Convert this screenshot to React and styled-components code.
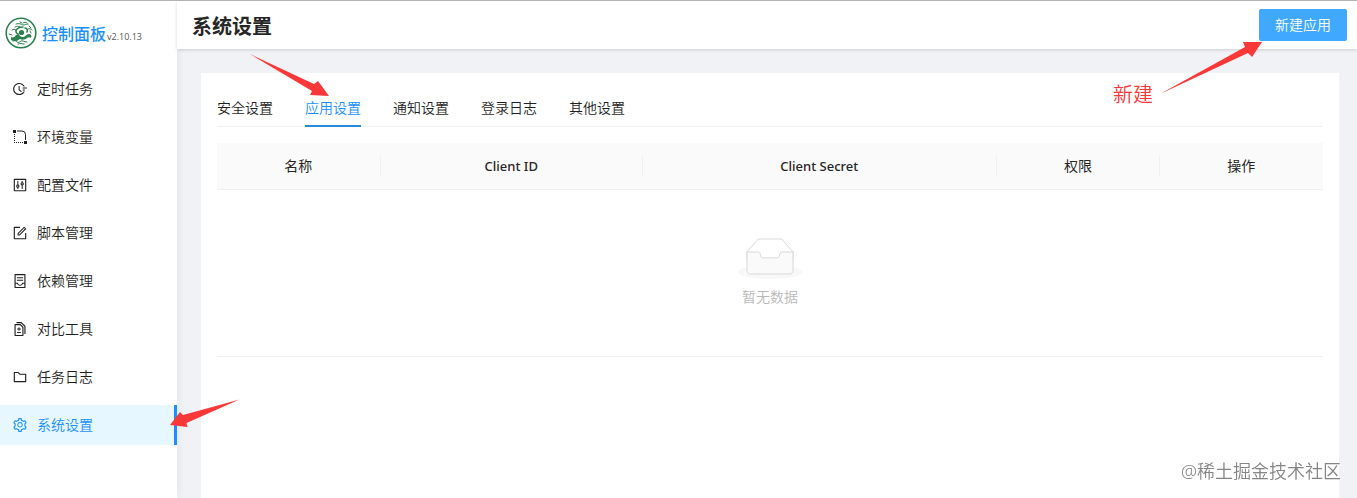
import React, { useState } from 'react'
import styled, { createGlobalStyle } from 'styled-components'
import {
  AiOutlineFieldTime,
  AiOutlineControl,
  AiOutlineForm,
  AiOutlineContainer,
  AiOutlineDiff,
  AiOutlineFolder,
  AiOutlineSetting,
} from 'react-icons/ai'

const GlobalStyle = createGlobalStyle`
  * {
    box-sizing: border-box;
  }

  body {
    margin: 0;
    overflow: hidden;
    color: #262626;
    background: #f0f2f5;
    font-family: 'Noto Sans', 'Noto Sans CJK SC', sans-serif;
    font-size: 14px;
    font-weight: 350;
    line-height: 22px;
  }

  button {
    font-family: inherit;
    font-weight: inherit;
  }
`

const Layout = styled.div`
  display: flex;
  min-height: 100vh;
  border-top: 1px solid #b8b8b8;
`

const Sidebar = styled.aside`
  flex: none;
  width: 177px;
  background: #fff;
  box-shadow: 2px 0 8px rgba(29, 35, 41, 0.05);
`

const Brand = styled.a`
  display: flex;
  align-items: center;
  height: 64px;
  padding-left: 5px;
  color: #1890ff;
  text-decoration: none;
`

const BrandName = styled.span`
  margin: 2px 0 0 5px;
  font-size: 16px;
  font-weight: 500;
`

const Version = styled.span`
  margin: 8px 0 0 1px;
  color: #555;
  font-family: 'Open Sans', sans-serif;
  font-size: 9px;
  font-weight: 500;
`

const Menu = styled.nav`
  display: flex;
  flex-direction: column;
  gap: 8px;
  padding-top: 4px;
`

const MenuItem = styled.a`
  position: relative;
  display: flex;
  align-items: center;
  gap: 9px;
  height: 40px;
  padding-left: 12px;
  color: ${({ $active }) => ($active ? '#1890ff' : '#1f1f1f')};
  background: ${({ $active }) => ($active ? '#e6f7ff' : 'transparent')};
  border-right: 3px solid ${({ $active }) => ($active ? '#1890ff' : 'transparent')};
  text-decoration: none;
`

const Main = styled.main`
  display: flex;
  flex: 1;
  flex-direction: column;
  min-width: 0;
`

const Header = styled.header`
  position: relative;
  display: flex;
  align-items: center;
  justify-content: space-between;
  height: 48px;
  padding: 0 10px 0 15px;
  background: #fff;
  box-shadow: 0 1px 3px rgba(0, 21, 41, 0.16);
`

const Title = styled.h1`
  margin: 4px 0 0;
  font-size: 20px;
  font-weight: 600;
  line-height: 32px;
`

const PrimaryButton = styled.button`
  height: 32px;
  padding: 0 16px 2px;
  color: #fff;
  background: #40a9ff;
  border: none;
  border-radius: 2px;
  font-size: 14px;
  cursor: pointer;
`

const Card = styled.section`
  flex: 1;
  margin: 24px 18px 0 24px;
  padding: 16px;
  background: #fff;
`

const Tabs = styled.div`
  display: flex;
  gap: 32px;
  margin-bottom: 16px;
  box-shadow: inset 0 -1px #f0f0f0;
`

const Tab = styled.button`
  position: relative;
  height: 38px;
  padding: 0 0 2px;
  color: ${({ $active }) => ($active ? '#1890ff' : '#1f1f1f')};
  background: none;
  border: none;
  box-shadow: ${({ $active }) => ($active ? 'inset 0 -2px #2a8bd8' : 'none')};
  font-size: 14px;
  cursor: pointer;
`

const Table = styled.table`
  width: 100%;
  table-layout: fixed;
  border-collapse: separate;
  border-spacing: 0;
`

const HeadCell = styled.th`
  width: ${({ $width }) => $width};
  height: 47px;
  padding: 0;
  background: #fafafa;
  border-bottom: 1px solid #f0f0f0;
  font-size: ${({ $latin }) => ($latin ? '13px' : '14px')};
  font-weight: ${({ $latin }) => ($latin ? 500 : 400)};
`

const HeadLabel = styled.div`
  border-right: 1px solid ${({ $last }) => ($last ? 'transparent' : '#f0f0f0')};
`

const EmptyCell = styled.td`
  padding: 48px 0;
  border-bottom: 1px solid #f0f0f0;
`

const Empty = styled.div`
  display: flex;
  flex-direction: column;
  align-items: center;
  gap: 7px;
  color: #b8b8b8;
`

const Arrow = styled.svg`
  position: absolute;
  z-index: 2;
  fill: #fb3838;
  pointer-events: none;
`

const TabArrow = styled(Arrow)`
  top: -35px;
  right: 32px;
`

const MenuArrow = styled(Arrow)`
  top: -6px;
  left: 170px;
`

const ButtonArrow = styled(Arrow)`
  top: 41px;
  right: 95px;
`

const Note = styled.span`
  position: absolute;
  top: 83px;
  right: 204px;
  z-index: 2;
  color: #fb3838;
  font-size: 20px;
`

const Watermark = styled.div`
  position: fixed;
  right: 16px;
  bottom: 16px;
  color: #858585;
  font-size: 18px;
  text-shadow: 1px 1px 1px #fff;
`

const EnvIcon = () => (
  <svg width="16" height="16" viewBox="0 0 16 16" fill="currentColor">
    <path d="M1 1h3v3H1zM12 12h3v3h-3z" />
    <path d="M5 2h5a3.500 3.500 0 0 1 3.500 3.500V11" fill="none" stroke="currentColor" />
    <path d="M2 5h1v1H2zM2 7h1v1H2zM2 9h1v1H2zM2 11h1v1H2zM2 13h1v1H2zM4 13h1v1H4zM6 13h1v1H6zM8 13h1v1H8zM10 13h1v1h-1z" />
  </svg>
)

const menu = [
  { label: '定时任务', icon: AiOutlineFieldTime },
  { label: '环境变量', icon: EnvIcon },
  { label: '配置文件', icon: AiOutlineControl },
  { label: '脚本管理', icon: AiOutlineForm },
  { label: '依赖管理', icon: AiOutlineContainer },
  { label: '对比工具', icon: AiOutlineDiff },
  { label: '任务日志', icon: AiOutlineFolder },
  { label: '系统设置', icon: AiOutlineSetting, active: true },
]

const tabs = ['安全设置', '应用设置', '通知设置', '登录日志', '其他设置']

const columns = [
  { title: '名称', width: '14.8%' },
  { title: 'Client ID', width: '23.7%', latin: true },
  { title: 'Client Secret', width: '32%', latin: true },
  { title: '权限', width: '14.8%' },
  { title: '操作', width: '14.7%' },
]

const Logo = () => (
  <svg width="32" height="32" viewBox="0 0 32 32" fill="none" stroke="#29804d" strokeLinecap="round">
    <circle cx="16" cy="16" r="14.8" strokeWidth="1.6" />
    <circle cx="16.500" cy="15.500" r="2.600" fill="#29804d" stroke="none" />
    <path
      fill="#29804d"
      stroke="none"
      d="M6 20c2 1 4 0 5-2l3-1c0 2 2 3 4 3 3 0 3-3 6-3 2 0 3 2 2 4-1-1-3-1-4 0-2 2-5 2-7 1-2 2-6 3-9 1z"
    />
    <path strokeWidth="1.6" d="M13 17c-2-1-3-3-1-5s4-2 6-2M20 11c2 0 3 2 2 4" />
    <path strokeWidth="1" d="M11 7c3-1 5 0 7 1 2 0 3-1 5-1M10 10c2-1 3-1 5 0M18 6c1-1 3-1 4 0M7 13c1-1 3-1 4 0M23 12c1-1 3 0 4 1" />
    <path strokeWidth="1" d="M8 24c2-1 3 0 4 1s3 0 4-1 3 1 6 1M13 27c2-1 4 0 6 0M4 17l3 1M24 9l2 2M15 5l2 1M25 14l1 2" />
  </svg>
)

const EmptyBox = () => (
  <svg width="64" height="41" viewBox="0 0 64 41">
    <g transform="translate(0 1)" fill="none" fillRule="evenodd">
      <ellipse fill="#f8f8f8" cx="32" cy="33" rx="32" ry="7" />
      <g stroke="#d9d9d9">
        <path
          fill="#fff"
          d="M55 12.76L44.854 1.258C44.367.474 43.656 0 42.907 0H21.093c-.749 0-1.46.474-1.947 1.257L9 12.761V22h46v-9.24z"
        />
        <path
          fill="#fafafa"
          d="M41.613 15.931c0-1.605.994-2.93 2.227-2.931H55v18.137C55 33.26 53.68 35 52.05 35h-40.1C10.32 35 9 33.259 9 31.137V13h11.16c1.233 0 2.227 1.323 2.227 2.928v.022c0 1.605 1.005 2.901 2.237 2.901h14.752c1.232 0 2.237-1.308 2.237-2.913v-.007z"
        />
      </g>
    </g>
  </svg>
)

const App = () => {
  const [activeTab, setActiveTab] = useState('应用设置')

  return (
    <>
      <GlobalStyle />
      <Layout>
        <Sidebar>
          <Brand href="#home">
            <Logo />
            <BrandName>控制面板</BrandName>
            <Version>v2.10.13</Version>
          </Brand>
          <Menu>
            {menu.map(({ label, icon: Icon, active }) => (
              <MenuItem key={label} href={`#${label}`} $active={active}>
                <Icon size={16} />
                {label}
                {active && (
                  <MenuArrow width="70" height="28">
                    <path d="M69.5.5L13 16l-3-3L0 26l17.500 2-1-4z" />
                  </MenuArrow>
                )}
              </MenuItem>
            ))}
          </Menu>
        </Sidebar>
        <Main>
          <Header>
            <Title>系统设置</Title>
            <PrimaryButton type="button">新建应用</PrimaryButton>
            <ButtonArrow width="102" height="52">
              <path d="M0 52L85 5l-2-5h19L92 15l-4-4z" />
            </ButtonArrow>
            <Note>新建</Note>
          </Header>
          <Card>
            <Tabs role="tablist">
              {tabs.map((tab) => (
                <Tab
                  key={tab}
                  type="button"
                  role="tab"
                  aria-selected={tab === activeTab}
                  $active={tab === activeTab}
                  onClick={() => setActiveTab(tab)}
                >
                  {tab}
                  {tab === '应用设置' && (
                    <TabArrow width="79" height="42">
                      <path d="M0 0L64 30l4-3 11 15-19-1 2-4z" />
                    </TabArrow>
                  )}
                </Tab>
              ))}
            </Tabs>
            <Table>
              <thead>
                <tr>
                  {columns.map(({ title, width, latin }, i) => (
                    <HeadCell key={title} $width={width} $latin={latin}>
                      <HeadLabel $last={i === columns.length - 1}>{title}</HeadLabel>
                    </HeadCell>
                  ))}
                </tr>
              </thead>
              <tbody>
                <tr>
                  <EmptyCell colSpan={columns.length}>
                    <Empty>
                      <EmptyBox />
                      <span>暂无数据</span>
                    </Empty>
                  </EmptyCell>
                </tr>
              </tbody>
            </Table>
          </Card>
        </Main>
      </Layout>
      <Watermark>@稀土掘金技术社区</Watermark>
    </>
  )
}

export default App
